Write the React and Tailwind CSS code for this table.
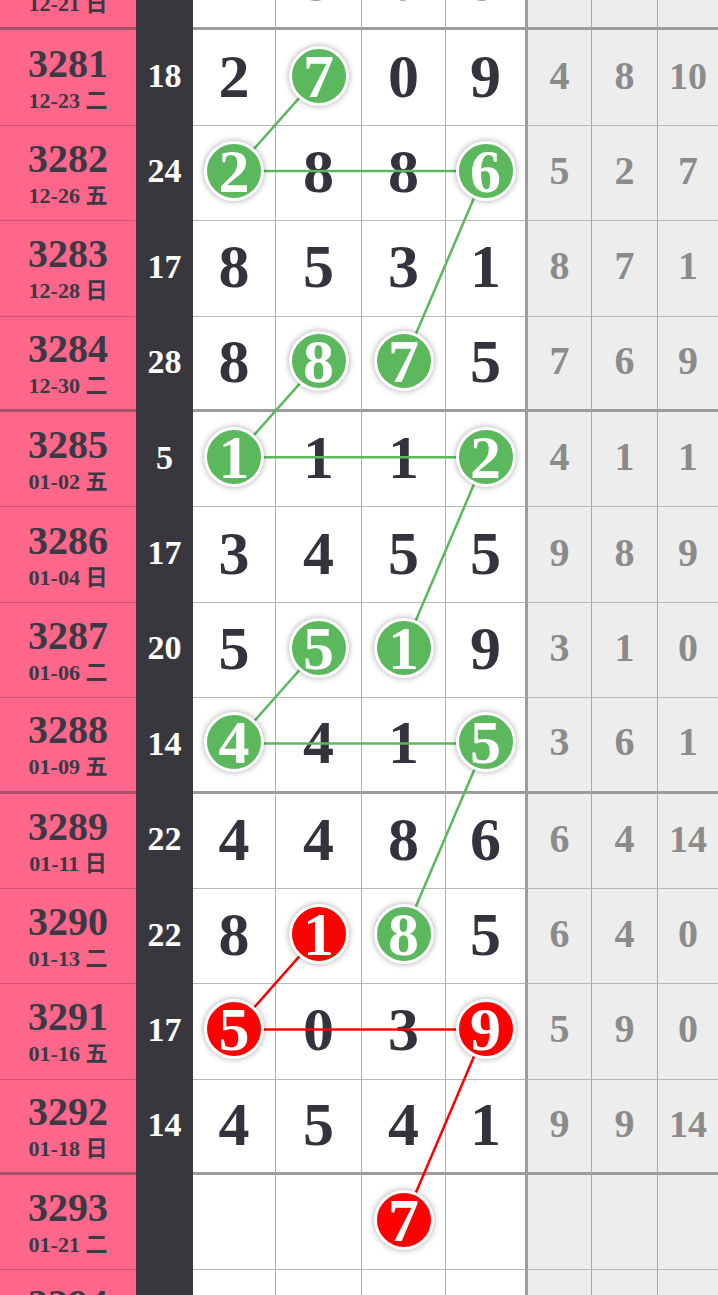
import React from 'react';

const ROW_H = 95.4;

const rows = [
    { no: '3280', date: '12-21 日', sum: '', d: ['2', '3', '0', '9'], g: ['', '', ''] },
    { no: '3281', date: '12-23 二', sum: '18', d: ['2', '7', '0', '9'], g: ['4', '8', '10'] },
    { no: '3282', date: '12-26 五', sum: '24', d: ['2', '8', '8', '6'], g: ['5', '2', '7'] },
    { no: '3283', date: '12-28 日', sum: '17', d: ['8', '5', '3', '1'], g: ['8', '7', '1'] },
    { no: '3284', date: '12-30 二', sum: '28', d: ['8', '8', '7', '5'], g: ['7', '6', '9'] },
    { no: '3285', date: '01-02 五', sum: '5', d: ['1', '1', '1', '2'], g: ['4', '1', '1'] },
    { no: '3286', date: '01-04 日', sum: '17', d: ['3', '4', '5', '5'], g: ['9', '8', '9'] },
    { no: '3287', date: '01-06 二', sum: '20', d: ['5', '5', '1', '9'], g: ['3', '1', '0'] },
    { no: '3288', date: '01-09 五', sum: '14', d: ['4', '4', '1', '5'], g: ['3', '6', '1'] },
    { no: '3289', date: '01-11 日', sum: '22', d: ['4', '4', '8', '6'], g: ['6', '4', '14'] },
    { no: '3290', date: '01-13 二', sum: '22', d: ['8', '1', '8', '5'], g: ['6', '4', '0'] },
    { no: '3291', date: '01-16 五', sum: '17', d: ['5', '0', '3', '9'], g: ['5', '9', '0'] },
    { no: '3292', date: '01-18 日', sum: '14', d: ['4', '5', '4', '1'], g: ['9', '9', '14'] },
    { no: '3293', date: '01-21 二', sum: '', d: ['', '', '7', ''], g: ['', '', ''] },
    { no: '3294', date: '01-23 四', sum: '', d: ['', '', '', ''], g: ['', '', ''] },
];

// row index -> { col: colour }
const circles = {
    1: { 1: 'g' },
    2: { 0: 'g', 3: 'g' },
    4: { 1: 'g', 2: 'g' },
    5: { 0: 'g', 3: 'g' },
    7: { 1: 'g', 2: 'g' },
    8: { 0: 'g', 3: 'g' },
    10: { 1: 'r', 2: 'g' },
    11: { 0: 'r', 3: 'r' },
    13: { 2: 'r' },
};

const segments = [
    ['#5cb85c', [1, 1], [2, 0]], ['#5cb85c', [2, 0], [2, 3]], ['#5cb85c', [2, 3], [4, 2]],
    ['#5cb85c', [4, 1], [5, 0]], ['#5cb85c', [5, 0], [5, 3]], ['#5cb85c', [5, 3], [7, 2]],
    ['#5cb85c', [7, 1], [8, 0]], ['#5cb85c', [8, 0], [8, 3]], ['#5cb85c', [8, 3], [10, 2]],
    ['#ff0000', [10, 1], [11, 0]], ['#ff0000', [11, 0], [11, 3]], ['#ff0000', [11, 3], [13, 2]],
];

const COL_X = [234.5, 319, 404, 485.5];
const cy = (i) => i * ROW_H + 45.2;

const CELL_W = ['w-[83px]', 'w-[86px]', 'w-[84px]', 'w-[82px]'];
const SERIF = { fontFamily: '"Liberation Serif", "Noto Sans CJK SC", serif' };

function Row({ r, i }) {
    const thick = i % 4 === 0;
    const lineW = thick ? 'border-b-[3px] border-b-[#9c9c9c]' : 'border-b border-b-[#b8b8b8]';
    return (
        <div className="flex h-[95.4px]">
            <div className={`w-[136px] flex flex-col items-center justify-center gap-[6px] bg-[#fe668a] text-[#3a3944] font-bold ${thick ? 'border-b-[3px] border-b-[#a9506a]' : 'border-b border-b-[#c85673]'}`}>
                <span className="text-[40px] leading-none">{r.no}</span>
                <span className="text-[22px] leading-none">{r.date}</span>
            </div>
            <div className="w-[57px] flex items-center justify-center pb-1 bg-[#38373e] text-white font-bold text-[34px] leading-none">
                {r.sum}
            </div>
            {r.d.map((v, c) => {
                const col = circles[i]?.[c];
                return (
                    <div
                        key={c}
                        className={`${CELL_W[c]} flex items-center justify-center pb-1 bg-white ${lineW} ${c === 3 ? 'border-r-[3px] border-r-[#9c9c9c]' : 'border-r border-r-[#b0b0b0]'}`}
                    >
                        {col ? (
                            <div className={`relative z-10 w-[60px] h-[60px] rounded-full border-[3px] border-white shadow-[0_0_6px_rgba(0,0,0,0.35)] flex items-center justify-center text-white text-[62px] font-bold leading-none ${col === 'g' ? 'bg-[#5cb85c]' : 'bg-[#ff0000]'}`}>
                                {v}
                            </div>
                        ) : (
                            <span className="text-[62px] font-bold leading-none text-[#34333d]">{v}</span>
                        )}
                    </div>
                );
            })}
            {r.g.map((v, c) => (
                <div
                    key={c}
                    className={`${c === 0 ? 'w-[64px]' : c === 1 ? 'w-[66px]' : 'flex-1'} flex items-center justify-center pb-1 bg-[#ededed] text-[#8b8b8b] font-bold leading-none ${v.length > 1 ? 'text-[38px]' : 'text-[40px]'} ${lineW} ${c < 2 ? 'border-r border-r-[#a8a8a8]' : ''}`}
                >
                    {v}
                </div>
            ))}
        </div>
    );
}

export default function App() {
    return (
        <div className="w-[718px] h-[1295px] overflow-hidden bg-white" style={SERIF}>
            <div className="relative -mt-[65px]">
                {rows.map((r, i) => (
                    <Row key={r.no} r={r} i={i} />
                ))}
                <svg className="absolute inset-0 pointer-events-none" width="718" height={rows.length * ROW_H}>
                    {segments.map(([color, a, b], k) => (
                        <line
                            key={k}
                            x1={COL_X[a[1]]} y1={cy(a[0])}
                            x2={COL_X[b[1]]} y2={cy(b[0])}
                            stroke={color} strokeWidth="2.5"
                        />
                    ))}
                </svg>
            </div>
        </div>
    );
}
